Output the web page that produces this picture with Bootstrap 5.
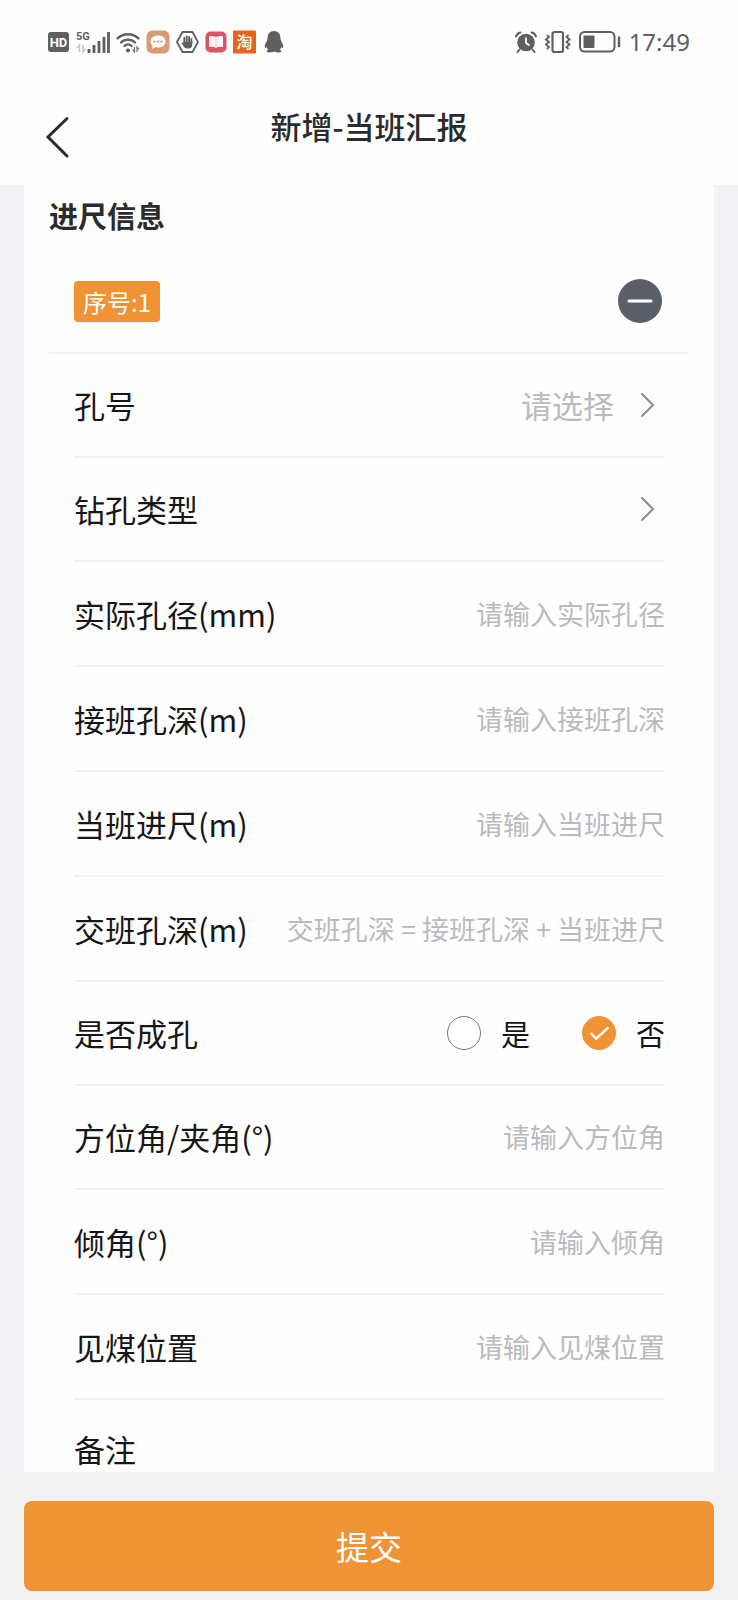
<!DOCTYPE html>
<html lang="zh-CN">
<head>
<meta charset="utf-8">
<meta name="viewport" content="width=device-width, initial-scale=1">
<title>新增-当班汇报</title>
<link href="https://cdn.jsdelivr.net/npm/bootstrap@5.3.0/dist/css/bootstrap.min.css" rel="stylesheet">
<style>
  :root { --brand: #ef9335; --ink: #161616; --hint: #b9babe; --rule: #f2f2f3; }
  body { font-family: "Noto Sans CJK SC", sans-serif; color: var(--ink); background: #fefefe; }
  .status-bar { height: 84px; padding: 0 48px; color: #5f5f5f; }
  .status-icons { gap: 6px; }
  .status-icons svg, .status-power svg { flex: none; display: block; overflow: visible; }
  .status-power { gap: 8px; }
  .clock { font: 24px/32px "Noto Sans", sans-serif; }
  .title-bar { display: grid; grid-template-columns: 1fr auto 1fr; align-items: start; padding: 22px 40px 17px; color: #2b2b2b; }
  .title-bar h1 { font-size: 31px; line-height: 40px; font-weight: 500; }
  .back-btn { width: 36px; height: 62px; color: inherit; }
  .scroller { min-height: 0; background: #f2f1f6; scrollbar-width: none; padding: 0 24px; }
  .scroller::-webkit-scrollbar { display: none; }
  .sheet { background: #fefefe; padding: 0 25px; }
  .sheet h2 { font-size: 29px; line-height: 40px; font-weight: 700; padding: 10px 0 15px; color: #2b2b2b; }
  .entry-head { padding: 29px 27px 29px 25px; border-bottom: 2px solid var(--rule); }
  .seq-tag { background: var(--brand); font-size: 24px; line-height: 41px; font-weight: 400; padding: 0 9px; border-radius: 4px; }
  .remove-btn { width: 44px; height: 44px; background: #5b6068; color: #fff; }
  .fields { padding: 0 24px 0 25px; font-size: 31px; line-height: 40px; }
  .field { height: 105px; border-bottom: 2px solid var(--rule); }
  .field-pick { height: 104px; }
  .field:last-child { height: 98px; border-bottom: 0; }
  .field label { white-space: nowrap; }
  .field-box { flex: 1; min-width: 0; width: 0; border: 0; padding: 0; background: none; font-size: 27px; line-height: 40px; text-align: right; color: var(--ink); outline: 0; resize: none; }
  .field-box::placeholder { color: var(--hint); opacity: 1; }
  select.field-box { appearance: none; font-size: 31px; text-align-last: right; color: var(--hint); margin-right: 26px; }
  .caret-icon { color: #8a8a8a; margin-right: 10px; flex: none; }
  .choices { gap: 52px; font-size: 29px; }
  .choice { gap: 20px; }
  .choice input { width: 34px; height: 34px; margin: 0; border: 1px solid #777; box-shadow: none; }
  .choice input:checked { border-color: var(--brand); background: var(--brand) url("data:image/svg+xml,%3Csvg xmlns='http://www.w3.org/2000/svg' viewBox='0 0 34 34'%3E%3Cpath d='M8 17l6 6 13-12' fill='none' stroke='%23fff' stroke-width='2.6'/%3E%3C/svg%3E") center / 100% no-repeat; }
  .action-bar { background: #f1f1f1; padding: 29px 24px 9px; }
  .submit-btn { height: 90px; font-size: 33px; line-height: 40px; border-radius: 8px; border: 0; background: var(--brand); color: #fff; }
</style>
</head>
<body class="d-flex flex-column vh-100 overflow-hidden">

<div class="status-bar d-flex align-items-center justify-content-between flex-shrink-0">
  <div class="status-icons d-flex align-items-center">
    <svg width="22" height="22" viewBox="0 0 22 22"><rect y="1" width="21" height="20" rx="3" fill="#5f5f5f"/><text x="10.500" y="16" text-anchor="middle" font-family="Roboto, sans-serif" font-weight="700" font-size="13" fill="#fff">HD</text></svg>
    <svg width="34" height="24" viewBox="0 0 34 24"><text x="0" y="10" font-family="Roboto, sans-serif" font-weight="700" font-size="11" fill="#5f5f5f">5G</text><path d="M3.500 22v-7l-2.500 3M7 15v7l2.500-3" fill="none" stroke="#c4c4c4" stroke-width="1.500"/><path d="M13 23v-4M18 23v-8M23 23V11M28 23V7M32.500 23V2" stroke="#5f5f5f" stroke-width="2.800"/></svg>
    <svg width="24" height="24" viewBox="0 0 24 24"><g fill="none" stroke="#5f5f5f" stroke-width="2.400" stroke-linecap="round"><path d="M1.500 8.500a15 15 0 0 1 21 0M5 12.500a10 10 0 0 1 14 0M8.500 16a5 5 0 0 1 7 0"/></g><circle cx="12" cy="20.500" r="2.100" fill="#5f5f5f"/><path d="M18.500 17v5l-2-2.500M21 22v-5l2 2.500" fill="none" stroke="#777" stroke-width="1.300"/></svg>
    <svg width="24" height="24" viewBox="0 0 24 24"><rect x=".5" y=".5" width="23" height="23" rx="6" fill="#d99a74"/><path d="M12 5.500c4.400 0 7.500 2.600 7.500 6s-3.100 6-7.500 6c-1 0-1.800-.1-2.600-.4L6 19l.6-3.200C5.200 14.700 4.500 13.200 4.500 11.500c0-3.400 3.100-6 7.500-6z" fill="#fff"/><g fill="#d08a62"><circle cx="8.500" cy="11.500" r="1.100"/><circle cx="12" cy="11.500" r="1.100"/><circle cx="15.500" cy="11.500" r="1.100"/></g></svg>
    <svg width="23" height="24" viewBox="0 0 23 24"><path d="M6.500 2h10L22 12l-5.500 10h-10L1 12z" fill="none" stroke="#5f5f5f" stroke-width="1.800" stroke-linejoin="round"/><path d="M8.300 13V8M10.700 12V6.500M13.100 12V7M15.400 13V9" stroke="#5f5f5f" stroke-width="1.900" stroke-linecap="round"/><path d="M7.500 12h8.700v3c0 2-1.500 3.500-3.500 3.500h-1.500c-1.700 0-3-1.200-4-2.700l-1.800-2.600c.7-1 1.600-.4 2.100.3z" fill="#5f5f5f"/></svg>
    <svg width="22" height="24" viewBox="0 0 22 24"><rect x=".5" y="1.500" width="21" height="21" rx="5" fill="#dc5564"/><path d="M4 6.500c2.600-.8 5-.6 7 .6 2-1.200 4.400-1.400 7-.6v10.700c-2.600-.7-5-.5-7 .6-2-1.100-4.400-1.300-7-.6z" fill="#fff5f4"/><path d="M11 7v11" stroke="#f0c6c8" stroke-width=".8"/></svg>
    <svg width="23" height="24" viewBox="0 0 23 24"><rect y=".5" width="23" height="23" rx="1" fill="#e6641f"/><text x="11.500" y="18" text-anchor="middle" font-family="Noto Sans CJK SC, sans-serif" font-weight="500" font-size="16" fill="#fff">淘</text></svg>
    <svg width="22" height="24" viewBox="0 0 22 24"><path d="M12 1c4 0 6.500 3 6.500 7.200 0 1 .2 1.800.7 2.800 1.300 2.200 2.300 4.600 2 6.500-.2.900-1 .6-1.900-.6-.3 1.200-.8 2-1.500 2.800 1.400.7 1.700 1.400 1.300 2.100-.5.900-4.700 1-7.100-.2-2.400 1.200-6.600 1.100-7.100.2-.4-.7-.1-1.400 1.300-2.100-.7-.8-1.200-1.600-1.500-2.800-.9 1.200-1.700 1.500-1.900.6-.3-1.900.7-4.300 2-6.500.5-1 .7-1.800.7-2.800C5.500 4 8 1 12 1z" fill="#5f5f5f"/></svg>
  </div>
  <div class="status-power d-flex align-items-center">
    <svg width="22" height="24" viewBox="0 0 22 24"><circle cx="11" cy="12.500" r="8.800" fill="#5f5f5f"/><path d="M1 6.500a6 6 0 0 1 4.500-4M21 6.500a6 6 0 0 0-4.500-4M4.500 19.500L2.500 22M17.500 19.500l2 2.500" fill="none" stroke="#5f5f5f" stroke-width="2" stroke-linecap="round"/><path d="M11 7.500v5.500l3.500 2.500" fill="none" stroke="#fff" stroke-width="1.800"/></svg>
    <svg width="26" height="24" viewBox="0 0 26 24"><rect x="7.500" y="2" width="10.500" height="20" rx="2" fill="none" stroke="#5f5f5f" stroke-width="2.200"/><path d="M2 5l2 2-3 2.500 3 2.500-3 2.500L4 17l-2 2M23.500 5l-2 2 3 2.500-3 2.500 3 2.500-3 2.500 2 2" fill="none" stroke="#5f5f5f" stroke-width="1.800"/></svg>
    <svg width="42" height="24" viewBox="0 0 42 24"><rect x="1" y="2" width="34.500" height="19.500" rx="4.500" fill="none" stroke="#5f5f5f" stroke-width="2"/><rect x="4.500" y="5.500" width="11" height="12.500" rx="1" fill="#5f5f5f"/><path d="M40 6.500v10.500" stroke="#5f5f5f" stroke-width="2.400"/></svg>
    <span class="clock">17:49</span>
  </div>
</div>

<header class="title-bar flex-shrink-0">
  <button type="button" class="back-btn btn p-0 border-0 d-flex align-items-center" aria-label="返回">
    <svg width="32" height="44" viewBox="0 0 32 44" fill="none" stroke="currentColor" stroke-width="3" stroke-linecap="round"><path d="M27 3.500L8 22l19 19"/></svg>
  </button>
  <h1 class="m-0">新增-当班汇报</h1>
</header>

<main class="scroller flex-grow-1 overflow-auto">
  <form id="report" class="sheet">
    <h2 class="m-0">进尺信息</h2>
    <div class="entry-head d-flex align-items-center justify-content-between">
      <span class="seq-tag badge">序号:1</span>
      <button type="button" class="remove-btn btn p-0 border-0 rounded-circle d-flex align-items-center justify-content-center" aria-label="删除">
        <svg width="26" height="4" viewBox="0 0 26 4"><path d="M2 2h22" stroke="currentColor" stroke-width="3" stroke-linecap="round"/></svg>
      </button>
    </div>
    <div class="fields">
      <div class="field field-pick d-flex align-items-center">
        <label for="hole">孔号</label>
        <select id="hole" class="field-box"><option>请选择</option></select>
        <svg class="caret-icon" width="15" height="28" viewBox="0 0 15 28" fill="none" stroke="currentColor" stroke-width="2" stroke-linecap="round"><path d="M2 3l11 11L2 25"/></svg>
      </div>
      <div class="field field-pick d-flex align-items-center">
        <label for="kind">钻孔类型</label>
        <select id="kind" class="field-box"><option></option></select>
        <svg class="caret-icon" width="15" height="28" viewBox="0 0 15 28" fill="none" stroke="currentColor" stroke-width="2" stroke-linecap="round"><path d="M2 3l11 11L2 25"/></svg>
      </div>
      <div class="field d-flex align-items-center">
        <label for="diameter">实际孔径(mm)</label>
        <input id="diameter" class="field-box" placeholder="请输入实际孔径">
      </div>
      <div class="field d-flex align-items-center">
        <label for="startDepth">接班孔深(m)</label>
        <input id="startDepth" class="field-box" placeholder="请输入接班孔深">
      </div>
      <div class="field d-flex align-items-center">
        <label for="advance">当班进尺(m)</label>
        <input id="advance" class="field-box" placeholder="请输入当班进尺">
      </div>
      <div class="field d-flex align-items-center">
        <label for="endDepth">交班孔深(m)</label>
        <input id="endDepth" class="field-box" readonly placeholder="交班孔深 = 接班孔深 + 当班进尺">
      </div>
      <div class="field field-pick d-flex align-items-center justify-content-between" role="radiogroup" aria-labelledby="doneLabel">
        <span id="doneLabel">是否成孔</span>
        <div class="choices d-flex">
          <div class="choice d-flex align-items-center">
            <input class="form-check-input" type="radio" name="done" id="doneYes"><label for="doneYes">是</label>
          </div>
          <div class="choice d-flex align-items-center">
            <input class="form-check-input" type="radio" name="done" id="doneNo" checked><label for="doneNo">否</label>
          </div>
        </div>
      </div>
      <div class="field field-pick d-flex align-items-center">
        <label for="azimuth">方位角/夹角(°)</label>
        <input id="azimuth" class="field-box" placeholder="请输入方位角">
      </div>
      <div class="field d-flex align-items-center">
        <label for="dip">倾角(°)</label>
        <input id="dip" class="field-box" placeholder="请输入倾角">
      </div>
      <div class="field d-flex align-items-center">
        <label for="coal">见煤位置</label>
        <input id="coal" class="field-box" placeholder="请输入见煤位置">
      </div>
      <div class="field d-flex align-items-center">
        <label for="note">备注</label>
        <textarea id="note" class="field-box" rows="1"></textarea>
      </div>
    </div>
  </form>
</main>

<footer class="action-bar flex-shrink-0">
  <button type="submit" form="report" class="submit-btn btn w-100">提交</button>
</footer>

<script src="https://cdn.jsdelivr.net/npm/bootstrap@5.3.0/dist/js/bootstrap.bundle.min.js"></script>
</body>
</html>
